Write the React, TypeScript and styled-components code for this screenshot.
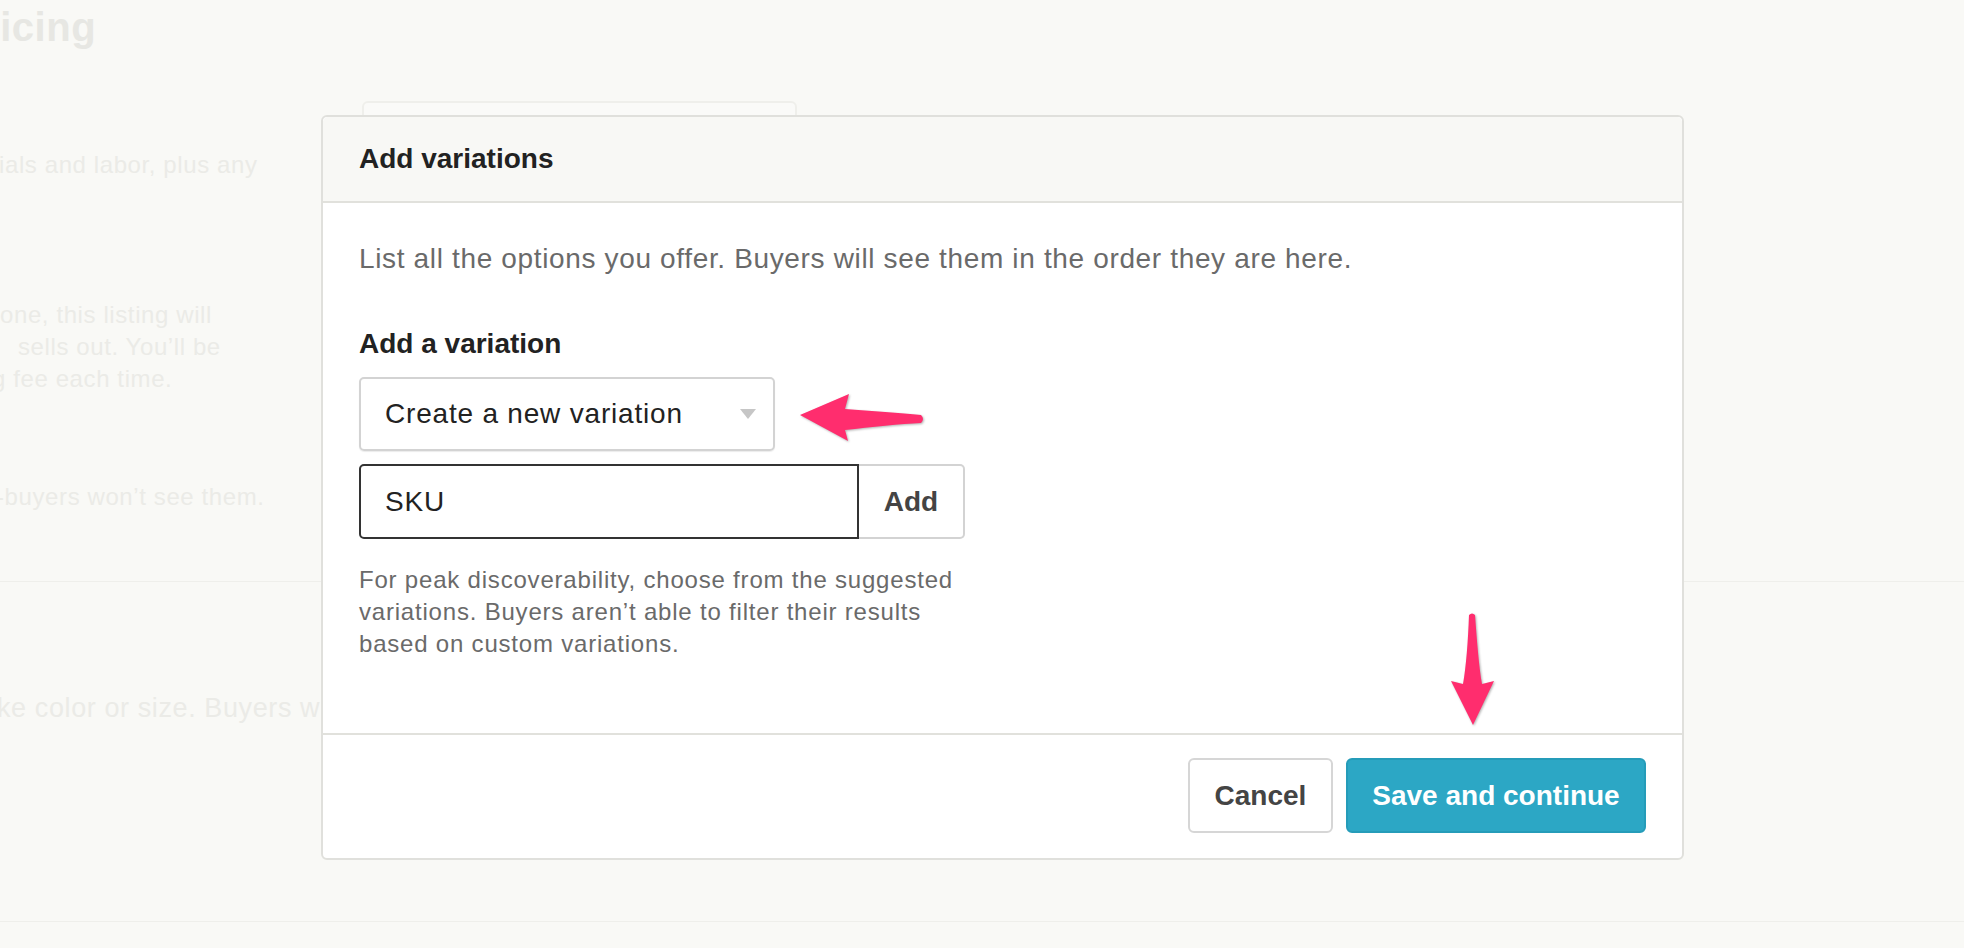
import React from "react";
import styled, { createGlobalStyle } from "styled-components";

const GlobalStyle = createGlobalStyle`
  html, body {
    margin: 0;
    padding: 0;
    background: #f9f9f6;
  }
  * {
    box-sizing: border-box;
  }
`;

const Page = styled.div`
  position: relative;
  width: 1964px;
  height: 948px;
  overflow: hidden;
  background: #f9f9f6;
  font-family: "Liberation Sans", Arial, sans-serif;
`;

/* ---------- faded page behind the dialog ---------- */

const Backdrop = styled.div`
  display: flex;
  flex-direction: column;
  color: #ebebe7;
`;

const TopSection = styled.section`
  height: 582px;
  padding-top: 3px;
  border-bottom: 1px solid #efefeb;
`;

const PageTitle = styled.h1`
  margin: 0 0 0 -43px;
  font-size: 40px;
  line-height: 48px;
  font-weight: 700;
  letter-spacing: 0.5px;
  color: #e7e7e3;
`;

const FieldRow = styled.div`
  display: flex;
  margin-top: 50px;
`;

const LeftCol = styled.div`
  width: 362px;
  padding-top: 48px;
`;

const PriceBox = styled.div`
  width: 435px;
  height: 80px;
  border: 2px solid #efefeb;
  border-radius: 6px;
  background: #fafaf8;
`;

const BgBlock = styled.div<{ $gap: number }>`
  margin-top: ${(p) => p.$gap}px;
`;

const BgText = styled.p<{ $indent: number; $size?: number }>`
  margin: 0 0 0 ${(p) => p.$indent}px;
  font-size: ${(p) => p.$size ?? 24}px;
  line-height: 32px;
  letter-spacing: 0.6px;
  white-space: nowrap;
`;

const VariationsSection = styled.section`
  height: 340px;
  padding-top: 110px;
  border-bottom: 1px solid #efefeb;
`;

/* ---------- dialog ---------- */

const Modal = styled.div`
  position: absolute;
  left: 321px;
  top: 115px;
  width: 1363px;
  display: flex;
  flex-direction: column;
  background: #fff;
  border: 2px solid #e0e0dc;
  border-radius: 6px;
`;

const ModalHeader = styled.div`
  height: 86px;
  display: flex;
  align-items: center;
  padding: 0 36px;
  background: #f8f8f5;
  border-bottom: 2px solid #e1e1dc;
  border-radius: 5px 5px 0 0;
`;

const ModalTitle = styled.h2`
  margin: 0;
  font-size: 28px;
  font-weight: 700;
  color: #222;
`;

const ModalBody = styled.div`
  display: flex;
  flex-direction: column;
  align-items: flex-start;
  padding: 36px 36px 73px;
`;

const Intro = styled.p`
  margin: 0;
  font-size: 28px;
  line-height: 1.4;
  letter-spacing: 0.65px;
  color: #6a6a6a;
`;

const Label = styled.div`
  margin-top: 46px;
  font-size: 28px;
  line-height: 1.4;
  font-weight: 700;
  color: #222;
`;

const Select = styled.div`
  margin-top: 14px;
  width: 416px;
  height: 74px;
  display: flex;
  align-items: center;
  justify-content: space-between;
  padding: 0 17px 0 24px;
  border: 2px solid #d3d3d3;
  border-radius: 5px;
  box-shadow: 0 1px 1px rgba(0, 0, 0, 0.08);
  font-size: 28px;
  letter-spacing: 0.8px;
  color: #222;
`;

const Caret = styled.span`
  width: 0;
  height: 0;
  border-left: 8px solid transparent;
  border-right: 8px solid transparent;
  border-top: 10px solid #c6c6c6;
`;

const InputGroup = styled.div`
  margin-top: 13px;
  display: flex;
  width: 606px;
  height: 75px;
`;

const TextInput = styled.div`
  width: 500px;
  display: flex;
  align-items: center;
  padding-left: 24px;
  border: 2px solid #333;
  border-radius: 5px 0 0 5px;
  font-size: 28px;
  letter-spacing: 0.8px;
  color: #222;
`;

const AddButton = styled.button`
  width: 106px;
  padding: 0;
  background: #fff;
  border: 2px solid #d3d3d3;
  border-left: none;
  border-radius: 0 5px 5px 0;
  font-family: inherit;
  font-size: 28px;
  font-weight: 700;
  color: #444;
`;

const Help = styled.p`
  margin: 25px 0 0;
  width: 606px;
  font-size: 24px;
  line-height: 32px;
  letter-spacing: 0.8px;
  color: #6a6a6a;
`;

const ModalFooter = styled.div`
  display: flex;
  justify-content: flex-end;
  gap: 13px;
  padding: 23px 36px 25px;
  border-top: 2px solid #e1e1dc;
`;

const Button = styled.button<{ $primary?: boolean }>`
  height: 75px;
  width: ${(p) => (p.$primary ? 300 : 145)}px;
  padding: 0;
  border-radius: 6px;
  border: 2px solid ${(p) => (p.$primary ? "#259cb9" : "#d6d6d6")};
  background: ${(p) => (p.$primary ? "#2ca7c5" : "#fff")};
  color: ${(p) => (p.$primary ? "#fff" : "#444")};
  font-family: inherit;
  font-size: 28px;
  font-weight: 700;
`;

/* ---------- annotation arrows ---------- */

const Arrow = styled.svg<{ $x: number; $y: number }>`
  position: absolute;
  left: ${(p) => p.$x}px;
  top: ${(p) => p.$y}px;
  overflow: visible;
  filter: drop-shadow(1px 1px 1px rgba(0, 0, 0, 0.3));
`;

const PINK = "#ff2d6e";

const App = () => {
  return (
    <Page>
      <GlobalStyle />
      <Backdrop>
        <TopSection>
          <PageTitle>Pricing</PageTitle>
          <FieldRow>
            <LeftCol>
              <BgText $indent={-1}>ials and labor, plus any</BgText>
            </LeftCol>
            <PriceBox />
          </FieldRow>
          <BgBlock $gap={118}>
            <BgText $indent={0}>one, this listing will</BgText>
            <BgText $indent={18}>sells out. You’ll be</BgText>
            <BgText $indent={-8}>g fee each time.</BgText>
          </BgBlock>
          <BgBlock $gap={86}>
            <BgText $indent={-4}>-buyers won’t see them.</BgText>
          </BgBlock>
        </TopSection>
        <VariationsSection>
          <BgText $indent={-3} $size={27}>
            ke color or size. Buyers will
          </BgText>
        </VariationsSection>
      </Backdrop>

      <Modal>
        <ModalHeader>
          <ModalTitle>Add variations</ModalTitle>
        </ModalHeader>
        <ModalBody>
          <Intro>
            List all the options you offer. Buyers will see them in the order
            they are here.
          </Intro>
          <Label>Add a variation</Label>
          <Select>
            <span>Create a new variation</span>
            <Caret />
          </Select>
          <InputGroup>
            <TextInput>SKU</TextInput>
            <AddButton>Add</AddButton>
          </InputGroup>
          <Help>
            For peak discoverability, choose from the suggested variations.
            Buyers aren’t able to filter their results based on custom
            variations.
          </Help>
        </ModalBody>
        <ModalFooter>
          <Button>Cancel</Button>
          <Button $primary>Save and continue</Button>
        </ModalFooter>

        <Arrow $x={473} $y={273} width="132" height="56" viewBox="0 0 132 56">
          <path
            d="M4,25 L53,4 L49,19 C75,21 105,23 125,25 Q129,29 125,33 C105,34 75,37 49,40 L52,51 Z"
            fill={PINK}
          />
        </Arrow>
        <Arrow $x={1123} $y={495} width="54" height="116" viewBox="0 0 54 116">
          <path
            d="M23,3 Q26,0 29,3 C31,30 33,55 36,72 L48,69 L27,113 L5,69 L17,72 C20,55 22,30 23,3 Z"
            fill={PINK}
          />
        </Arrow>
      </Modal>
    </Page>
  );
};

export default App;
